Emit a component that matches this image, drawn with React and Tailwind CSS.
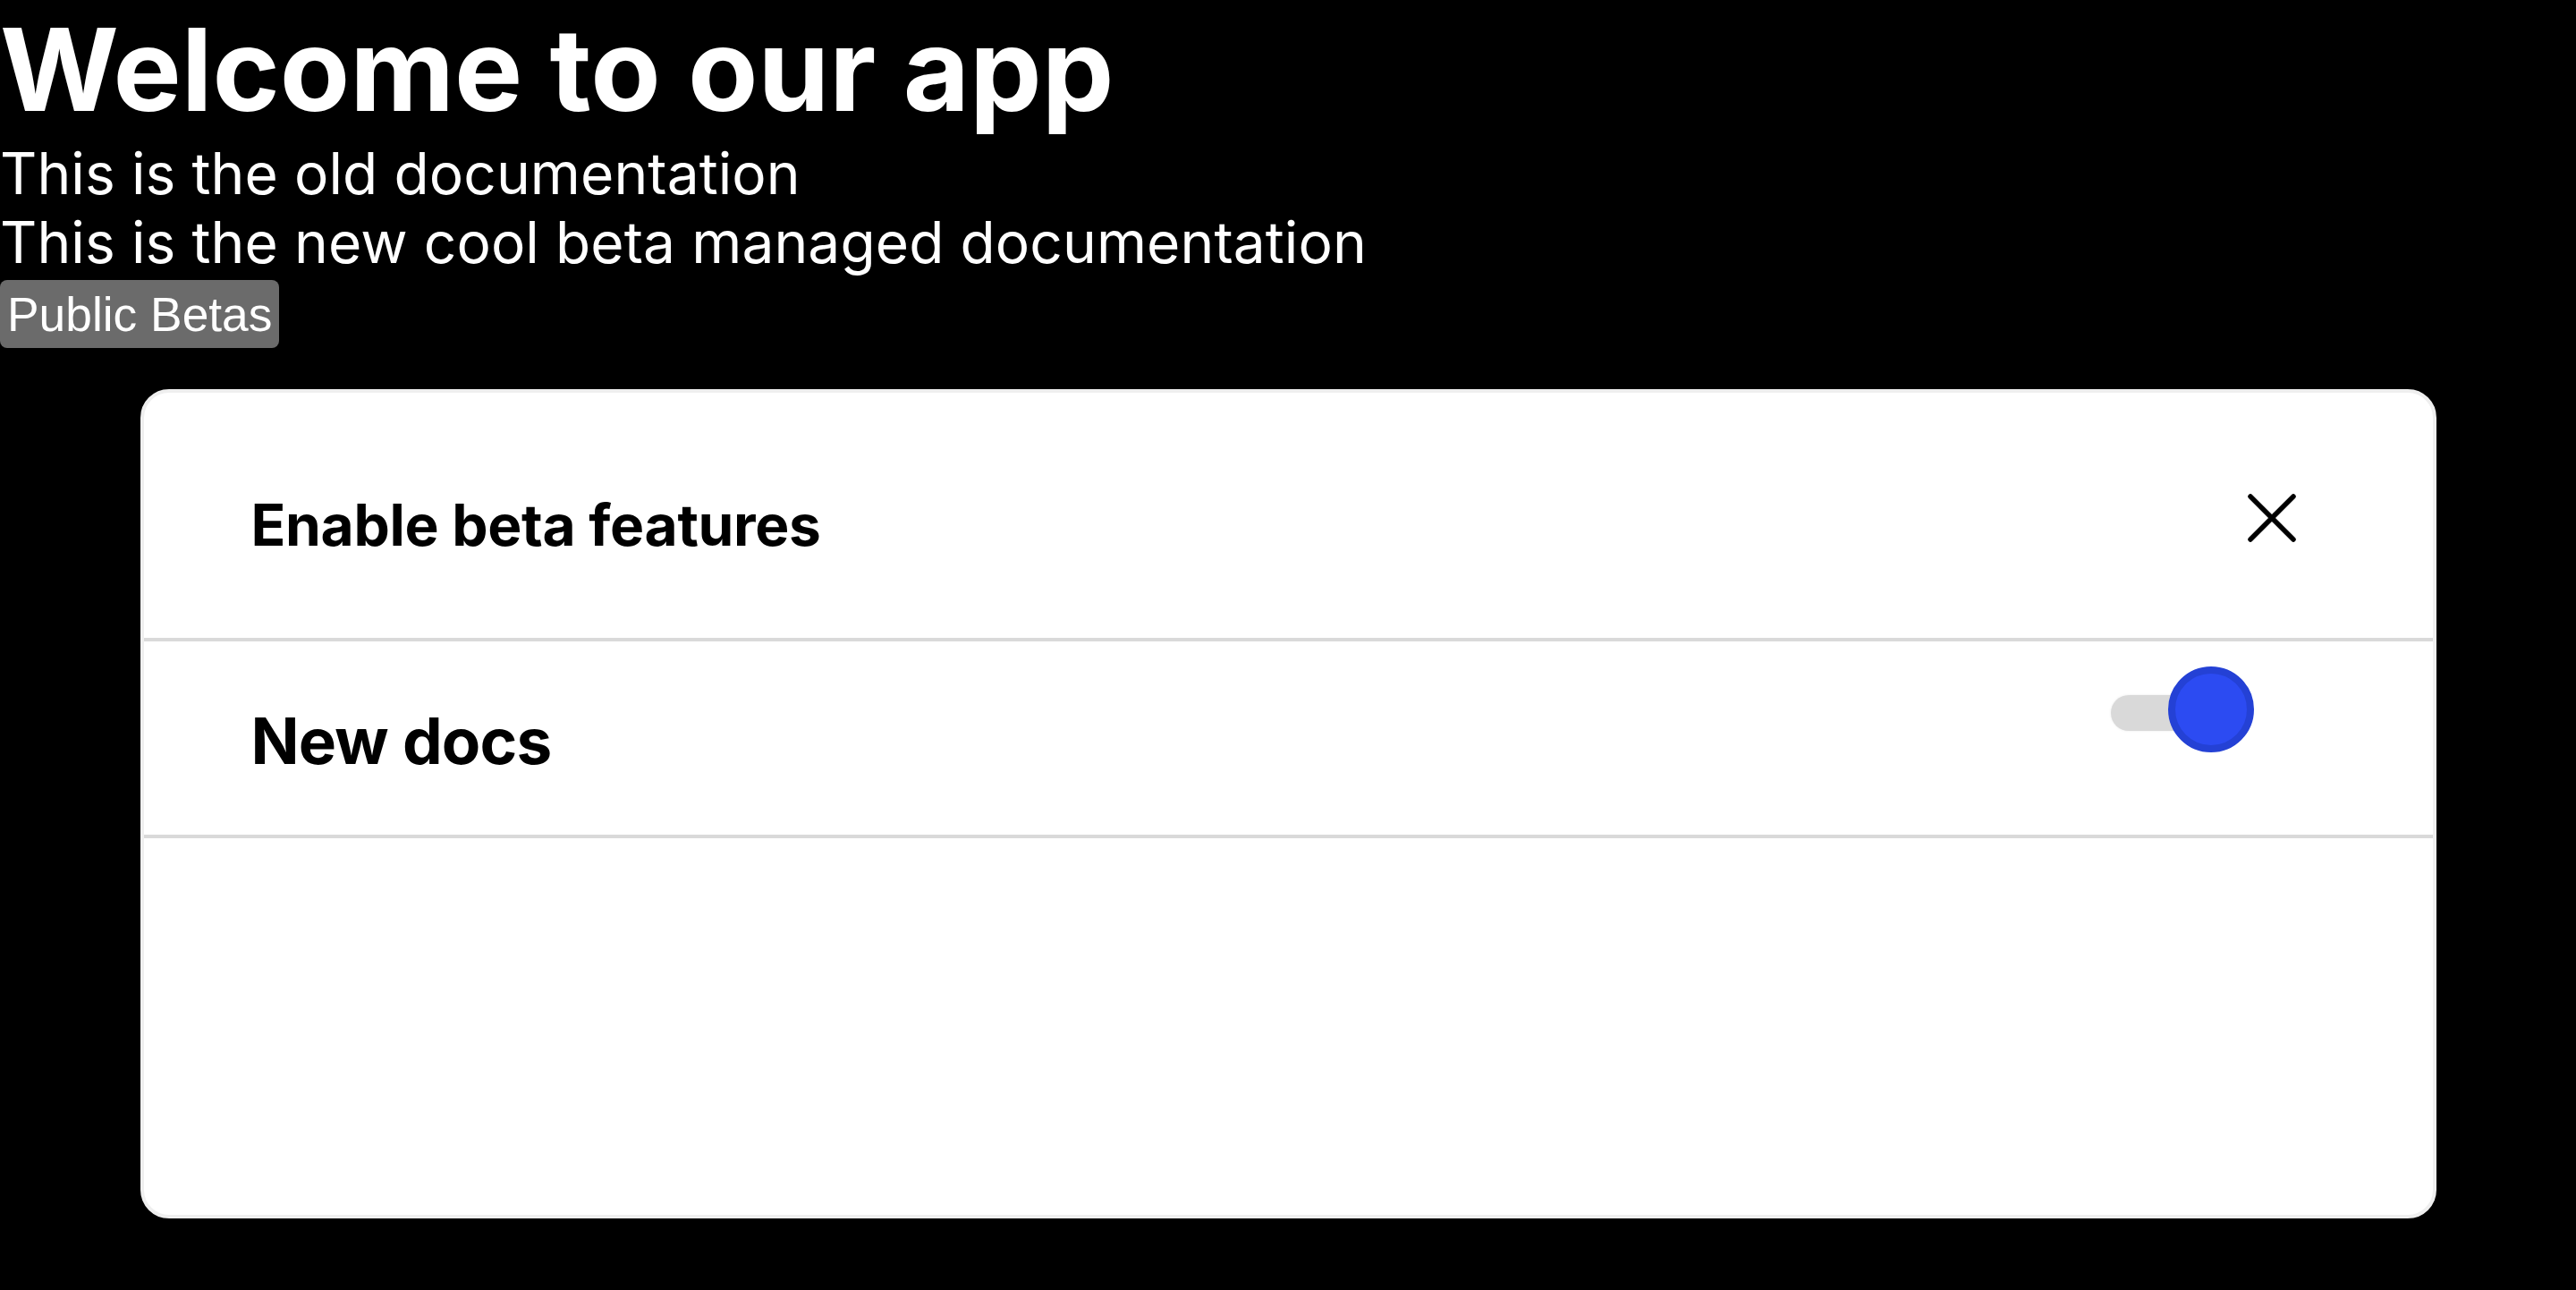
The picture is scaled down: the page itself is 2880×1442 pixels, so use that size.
export default function App() {
  return (
    <div className="min-h-[1442px] bg-black text-white" style={{ fontFamily: "Inter, 'Noto Sans', sans-serif" }}>
      <h1 className="m-0 text-[128px] font-bold leading-[normal]">Welcome to our app</h1>
      <p className="m-0 text-[64px] leading-[normal] tracking-[0.1px]">This is the old documentation</p>
      <p className="m-0 text-[64px] leading-[normal] tracking-[0.1px]">This is the new cool beta managed documentation</p>
      <button
        className="mt-[4px] flex h-[76px] items-center rounded-[8px] bg-[#6b6b6b] px-[8px] text-[53.33px] leading-[normal] text-white"
        style={{ fontFamily: "'Liberation Sans', Arial, sans-serif" }}
      >
        Public Betas
      </button>
      <div className="mx-auto mt-[46px] flex h-[927px] w-[2567px] flex-col overflow-hidden rounded-[32px] border-[4px] border-[#efefef] bg-white text-black">
        <div className="flex h-[278px] shrink-0 items-start justify-between border-b-[4px] border-[#d9d9d9] pl-[120px] pr-[153px]">
          <h4 className="m-0 mt-[109px] text-[64px] font-bold leading-[normal] tracking-[-0.3px]">Enable beta features</h4>
          <svg className="mt-[113px]" width="54" height="54" viewBox="0 0 54 54" fill="none">
            <path d="M3 3 L51 51 M51 3 L3 51" stroke="#000" strokeWidth="5.5" strokeLinecap="round" />
          </svg>
        </div>
        <div className="flex h-[220px] shrink-0 items-start justify-between border-b-[4px] border-[#d9d9d9] pl-[120px] pr-[200px]">
          <h3 className="m-0 mt-[68px] text-[71px] font-bold leading-[normal] tracking-[-0.8px]">New docs</h3>
          <div className="relative mt-[28px] h-[96px] w-[160px]">
            <div className="absolute left-0 top-[32px] h-[40px] w-[140px] rounded-full bg-[#d9d9d9] shadow-[0_0_3px_rgba(0,0,0,0.08)]" />
            <div className="absolute right-0 top-0 h-[96px] w-[96px] rounded-full border-[8px] border-[#2441d5] bg-[#2c4bf2]" />
          </div>
        </div>
      </div>
    </div>
  );
}
